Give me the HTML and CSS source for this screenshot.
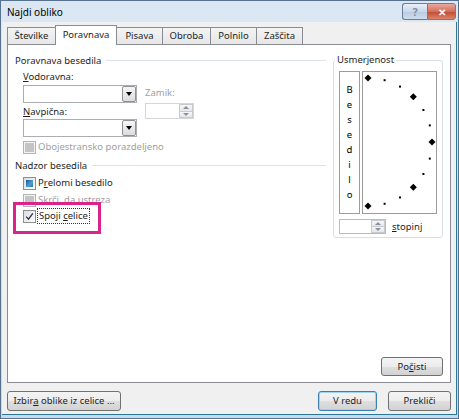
FILE: index.html
```html
<!DOCTYPE html>
<html lang="sl">
<head>
    <meta charset="UTF-8">
    <title>Najdi obliko</title>
    <link rel="stylesheet" href="styles.css">
</head>
<body>
    <div class="window">
        <div class="titlebar">
            <span class="title">Najdi obliko</span>
            <div class="caption-buttons">
                <span class="cap-help">?</span>
                <span class="cap-close">✕</span>
            </div>
        </div>

        <div class="client">
            <div class="tabs">
                <span class="tab w-stevilke">Številke</span>
                <span class="tab active w-poravnava">Poravnava</span>
                <span class="tab w-pisava">Pisava</span>
                <span class="tab w-obroba">Obroba</span>
                <span class="tab w-polnilo">Polnilo</span>
                <span class="tab w-zascita">Zaščita</span>
            </div>

            <div class="panel">
                <div class="panel-main">
                    <div class="left-col">
                        <div class="group-title"><span>Poravnava besedila</span></div>
                        <div class="group-body">
                            <div class="align-row">
                                <div class="align-combos">
                                    <label class="lbl lbl-first"><u>V</u>odoravna:</label>
                                    <div class="combo"><span class="combo-btn"></span></div>
                                    <label class="lbl"><u>N</u>avpična:</label>
                                    <div class="combo combo-flush"><span class="combo-btn"></span></div>
                                </div>
                                <div class="indent-box">
                                    <label class="lbl disabled">Zamik:</label>
                                    <div class="spin spin-indent">
                                        <span class="spin-btns"><i class="up"></i><i class="down"></i></span>
                                    </div>
                                </div>
                            </div>
                            <div class="check-row row-distributed disabled">
                                <span class="cb cb-disabled"></span>Obojestransko porazdeljeno
                            </div>
                        </div>

                        <div class="group-title group-second"><span>Nadzor besedila</span></div>
                        <div class="group-body">
                            <div class="check-row row-wrap">
                                <span class="cb cb-mixed"></span>P<u>r</u>elomi besedilo
                            </div>
                            <div class="check-row row-shrink disabled">
                                <span class="cb cb-disabled"></span>S<u>k</u>rči, da ustreza
                            </div>
                            <div class="check-row row-merge">
                                <span class="cb">
                                    <svg width="11" height="11" viewBox="0 0 11 11"><path d="M2.2 5.6 L4.5 8.2 L8.8 2.3" fill="none" stroke="#22344f" stroke-width="1.3"/></svg>
                                </span><span class="focus">Spoji <u>c</u>elice</span>
                                <span class="highlight"></span>
                            </div>
                        </div>
                    </div>

                    <fieldset class="orient">
                        <legend>Usmerjenost</legend>
                        <div class="orient-top">
                            <div class="vert-box"><span class="vert-text">Besedilo</span></div>
                            <div class="dial">
                                <svg width="73" height="141" viewBox="0 0 73 141">
                                    <g fill="#000">
                                        <polygon points="5,2.5 8.5,6 5,9.5 1.5,6"/>
                                        <rect x="20.6" y="7.2" width="2" height="2"/>
                                        <rect x="36" y="13.6" width="2" height="2"/>
                                        <polygon points="50.3,21.2 53.8,24.7 50.3,28.2 46.8,24.7"/>
                                        <rect x="59.4" y="37" width="2" height="2"/>
                                        <rect x="65.8" y="52.4" width="2" height="2"/>
                                        <polygon points="69,66.5 72.5,70 69,73.5 65.5,70"/>
                                        <rect x="65.8" y="85.6" width="2" height="2"/>
                                        <rect x="59.4" y="101" width="2" height="2"/>
                                        <polygon points="50.3,111.8 53.8,115.3 50.3,118.8 46.8,115.3"/>
                                        <rect x="36" y="124.4" width="2" height="2"/>
                                        <rect x="20.6" y="130.8" width="2" height="2"/>
                                        <polygon points="5,130.5 8.5,134 5,137.5 1.5,134"/>
                                    </g>
                                </svg>
                            </div>
                        </div>
                        <div class="degrees-row">
                            <div class="spin spin-degrees">
                                <span class="spin-btns"><i class="up"></i><i class="down"></i></span>
                            </div>
                            <label class="lbl"><u>s</u>topinj</label>
                        </div>
                    </fieldset>
                </div>

                <div class="panel-foot">
                    <button class="btn btn-clear">Po<u>č</u>isti</button>
                </div>
            </div>

            <div class="dialog-foot">
                <button class="btn btn-pick">Izbir<u>a</u> oblike iz celice ...</button>
                <button class="btn btn-ok">V redu</button>
                <button class="btn btn-cancel">Prekliči</button>
            </div>
        </div>
    </div>
</body>
</html>
```

FILE: styles.css
```css
body {
    margin: 0;
    font-family: "Noto Sans", "Open Sans", sans-serif;
    font-size: 9.5px;
    color: #1e1e1e;
    background: #fff;
}

u {
    text-decoration-thickness: 1px;
    text-underline-offset: 1px;
}

/* okno */
.window {
    width: 459px;
    height: 419px;
    box-sizing: border-box;
    border: 1px solid #56728f;
    padding: 0 1px 3px 1px;
    background: linear-gradient(#dce7f4, #c6d8ec);
    display: flex;
    flex-direction: column;
}

.titlebar {
    height: 21px;
    flex: none;
    display: flex;
    justify-content: space-between;
    align-items: flex-start;
    padding-right: 1px;
}

.title {
    font-size: 10px;
    line-height: 14px;
    margin: 4px 0 0 5px;
    color: #000;
}

.caption-buttons {
    display: flex;
    margin-top: 2px;
}

.cap-help,
.cap-close {
    height: 17px;
    box-sizing: border-box;
    border: 1px solid #6b7d93;
    display: flex;
    align-items: center;
    justify-content: center;
    color: #fff;
    font-weight: bold;
}

.cap-help {
    width: 25px;
    border-radius: 3px 0 0 3px;
    border-right: none;
    background: linear-gradient(#e9f0f9, #c9d8ea 50%, #b9cbe2 51%, #cfddee);
    color: #7d8ea5;
    font-size: 11px;
}

.cap-close {
    width: 29px;
    border-radius: 0 3px 3px 0;
    background: linear-gradient(#e9a99c, #d2705d 50%, #c24a32 51%, #d9836b);
    font-size: 10px;
}

/* vsebina okna */
.client {
    flex: 1;
    background: #f0f0f0;
    border-right: 1px solid #2c7894;
    border-bottom: 1px solid #2c7894;
    padding: 3px 5px 0 5px;
    display: flex;
    flex-direction: column;
}

.tabs {
    height: 19px;
    display: flex;
    align-items: flex-end;
}

.tab {
    height: 17px;
    box-sizing: border-box;
    border: 1px solid #898c95;
    border-bottom: none;
    margin-left: -1px;
    background: linear-gradient(#f4f4f4, #e6e6e6);
    text-align: center;
    line-height: 15px;
}

.tab:first-child {
    margin-left: 0;
}

.tab.active {
    height: 20px;
    margin-bottom: -1px;
    background: #fff;
    line-height: 17px;
    position: relative;
    z-index: 1;
}

.w-stevilke { width: 49px; }
.w-poravnava { width: 62px; }
.w-pisava { width: 47px; }
.w-obroba { width: 49px; }
.w-polnilo { width: 47px; }
.w-zascita { width: 47px; }

.panel {
    height: 339px;
    box-sizing: border-box;
    border: 1px solid #898c95;
    background: #fff;
    padding: 8px 7px 6px 7px;
    display: flex;
    flex-direction: column;
}

.panel-main {
    display: flex;
    gap: 7px;
}

.left-col {
    width: 311px;
}

.group-title {
    display: flex;
    align-items: center;
    height: 14px;
}

.group-title::after {
    content: "";
    flex: 1;
    border-top: 1px solid #dde2e8;
    margin-left: 5px;
}

.group-second {
    margin-top: 4px;
}

.group-body {
    padding-left: 8px;
}

.lbl {
    display: block;
    line-height: 14px;
}

.disabled {
    color: #a0a0a0;
}

.align-row {
    display: flex;
    gap: 8px;
    margin-top: 3px;
}

.align-combos .lbl-first {
    margin-bottom: 1px;
}

.align-combos .combo {
    margin-bottom: 2px;
}

.align-combos .combo-flush {
    margin-bottom: 0;
}

.combo {
    width: 114px;
    height: 18px;
    box-sizing: border-box;
    border: 1px solid #abadb3;
    background: #fff;
    display: flex;
    justify-content: flex-end;
}

.combo-btn {
    width: 14px;
    box-sizing: border-box;
    border: 1px solid #8f9296;
    border-radius: 2px;
    background: linear-gradient(#f6f6f6, #dcdcdc);
    display: flex;
    align-items: center;
    justify-content: center;
}

.combo-btn::after {
    content: "";
    border-top: 4px solid #000;
    border-left: 3.5px solid transparent;
    border-right: 3.5px solid transparent;
}

.indent-box {
    margin-top: 16px;
}

.spin {
    box-sizing: border-box;
    border: 1px solid #b8bcc2;
    background: #fff;
    display: flex;
    justify-content: flex-end;
}

.spin-indent {
    width: 49px;
    height: 16px;
    margin-top: 3px;
    border-color: #d3d6da;
}

.spin-btns {
    width: 14px;
    display: flex;
    flex-direction: column;
}

.spin-btns i {
    flex: 1;
    border: 1px solid #c7cbd0;
    background: linear-gradient(#f6f7f9, #e4e7eb);
    display: flex;
    align-items: center;
    justify-content: center;
}

.spin-btns i + i {
    border-top: none;
}

.spin-btns .up::after {
    content: "";
    border-bottom: 3px solid #8a9098;
    border-left: 3px solid transparent;
    border-right: 3px solid transparent;
}

.spin-btns .down::after {
    content: "";
    border-top: 3px solid #8a9098;
    border-left: 3px solid transparent;
    border-right: 3px solid transparent;
}

/* potrditvena polja */
.check-row {
    display: flex;
    align-items: center;
    line-height: 14px;
    position: relative;
}

.row-distributed { margin-top: 3px; }
.row-wrap { margin-top: 4px; }
.row-shrink { margin-top: 3px; }
.row-merge { margin-top: 1px; }

.cb {
    width: 13px;
    height: 13px;
    box-sizing: border-box;
    border: 1px solid #8e8f8f;
    background: linear-gradient(135deg, #dcdcdc, #fdfdfd);
    margin-right: 2px;
    flex: none;
    position: relative;
    display: flex;
    align-items: center;
    justify-content: center;
}

.cb-mixed::after {
    content: "";
    position: absolute;
    inset: 2px;
    background: linear-gradient(135deg, #1c5a8f, #4f9fd6 60%, #2d6fa6);
}

.cb-disabled {
    border-color: #b3b3b3;
    background: #f4f4f4;
}

.cb-disabled::after {
    content: "";
    position: absolute;
    inset: 1px;
    background: #c4c4c4;
}

.focus {
    border: 1px dotted #333;
    padding: 0 1px;
    line-height: 14px;
    margin-left: -1px;
}

/* oznaka okrog "Spoji celice" */
.highlight {
    position: absolute;
    left: -10px;
    top: -6px;
    width: 88px;
    height: 32px;
    box-sizing: border-box;
    border: 3px solid #d9258b;
}

/* usmerjenost */
.orient {
    width: 110px;
    box-sizing: border-box;
    margin: 0;
    min-width: 0;
    border: 1px solid #d5dfe5;
    border-radius: 3px;
    padding: 4px 5px 3px 5px;
    align-self: flex-start;
}

.orient legend {
    padding: 0 2px;
    margin-left: -4px;
    line-height: 14px;
}

.orient-top {
    display: flex;
    gap: 2px;
    height: 143px;
}

.vert-box {
    width: 21px;
    box-sizing: border-box;
    border: 1px solid #9c9c9c;
    display: flex;
    align-items: center;
    justify-content: center;
}

.vert-text {
    writing-mode: vertical-lr;
    text-orientation: upright;
    letter-spacing: 2px;
    color: #000;
}

.dial {
    width: 75px;
    box-sizing: border-box;
    border: 1px solid #9c9c9c;
}

.dial svg {
    display: block;
}

.degrees-row {
    display: flex;
    align-items: center;
    gap: 6px;
    margin-top: 5px;
}

.spin-degrees {
    width: 47px;
    height: 15px;
}

/* gumbi */
.panel-foot {
    margin-top: auto;
    display: flex;
    justify-content: flex-end;
}

.btn {
    height: 19px;
    box-sizing: border-box;
    border: 1px solid #707070;
    border-radius: 3px;
    background: linear-gradient(#f4f4f4, #ececec 50%, #dfdfdf 51%, #d2d2d2);
    font: inherit;
    color: #1e1e1e;
    padding: 0;
    line-height: 16px;
}

.btn-clear {
    width: 62px;
}

.dialog-foot {
    display: flex;
    margin-top: 8px;
}

.dialog-foot .btn {
    height: 20px;
}

.btn-pick {
    width: 114px;
}

.btn-ok {
    width: 59px;
    margin-left: auto;
    border-color: #3c7fb1;
    box-shadow: inset 0 0 0 1px #9fd3f2;
}

.btn-cancel {
    width: 63px;
    margin-left: 11px;
}
```
